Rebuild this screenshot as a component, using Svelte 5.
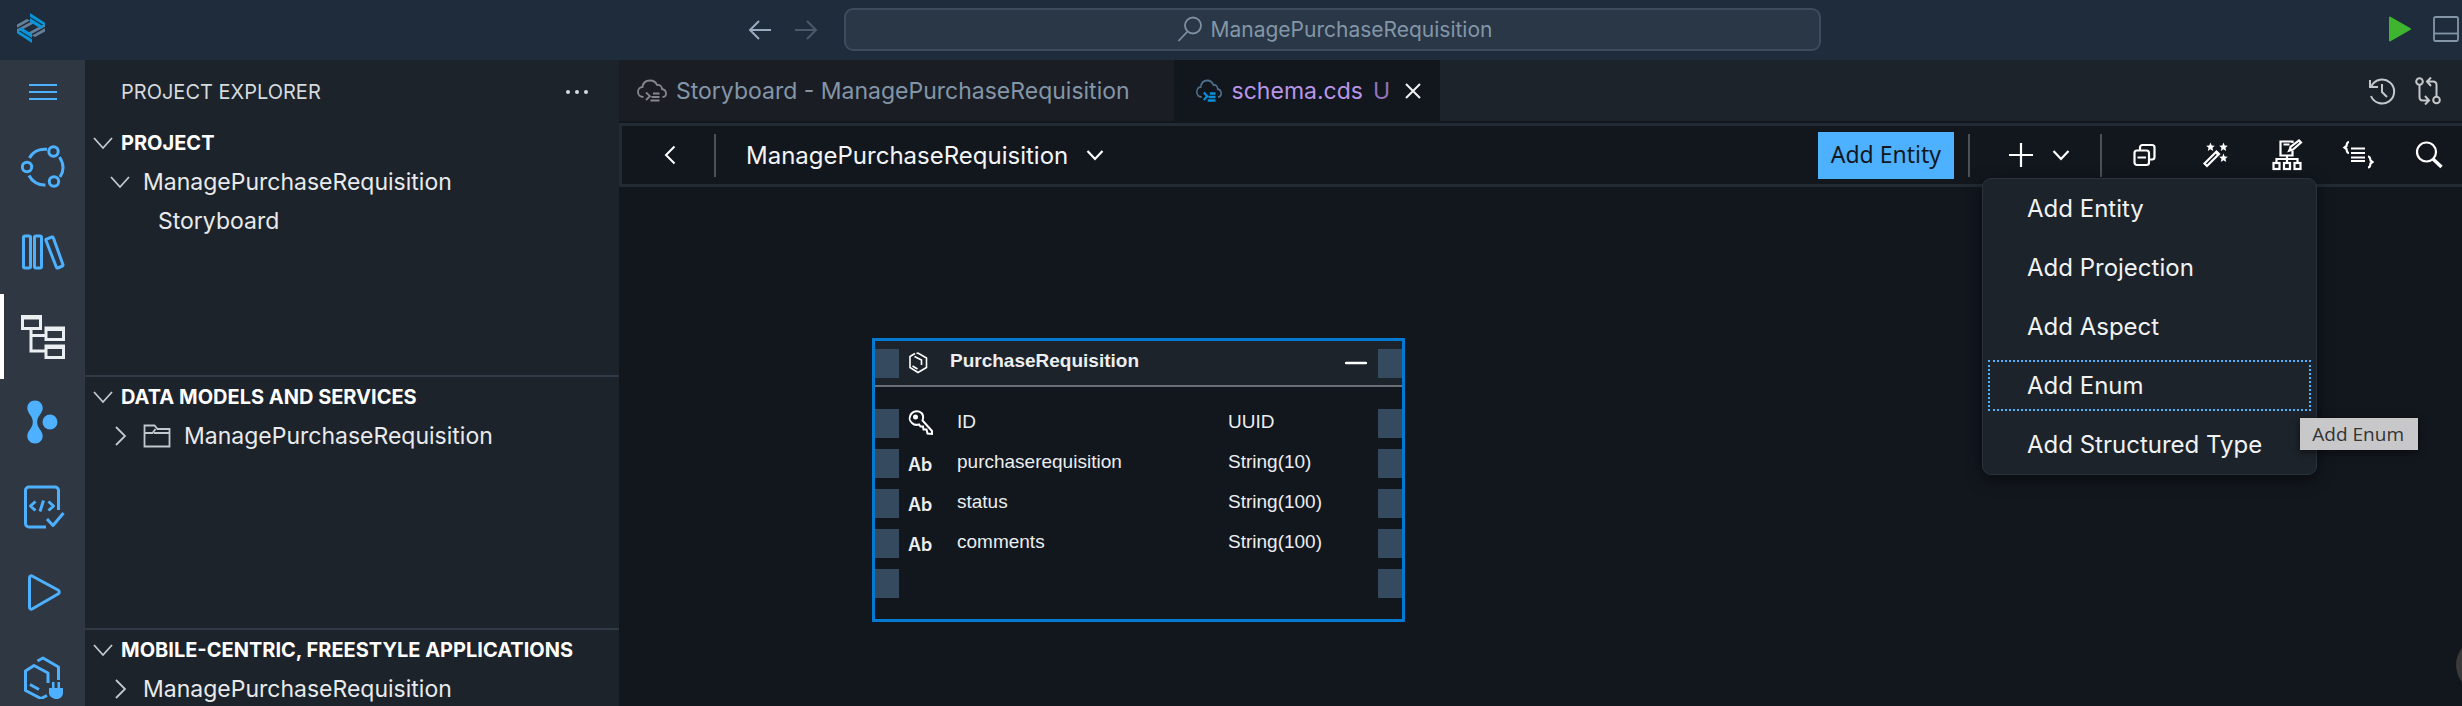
<script>
  const activities = ['share', 'library', 'tree', 'graph', 'tests', 'run', 'plug'];
  const labels = {
    share: 'Source relations',
    library: 'Library',
    tree: 'Project Explorer',
    graph: 'Source control',
    tests: 'Tests',
    run: 'Run configurations',
    plug: 'Connections'
  };
  let active = $state('tree');
  let focused = $state('Add Enum');

  const menu = ['Add Entity', 'Add Projection', 'Add Aspect', 'Add Enum', 'Add Structured Type'];

  const fields = [
    { name: 'ID', type: 'UUID', key: true },
    { name: 'purchaserequisition', type: 'String(10)' },
    { name: 'status', type: 'String(100)' },
    { name: 'comments', type: 'String(100)' }
  ];
</script>

{#snippet chevron(dir)}
  <svg class="chev" width="20" height="20" viewBox="0 0 20 20">
    {#if dir === 'down'}
      <path d="M1 5l9 10 9-10" />
    {:else}
      <path d="M6 1l9 9-9 9" />
    {/if}
  </svg>
{/snippet}

{#snippet cloud(cls, w)}
  <svg class={cls} width={w} height="24" viewBox="0 0 30 24" preserveAspectRatio="none">
    <path class="outline" d="M6.500 18C3 18 1 15.800 1 13c0-3 2-5 4.500-5C6 4 9 1.500 13 1.500c3.500 0 6 2 7 4.500 3-.5 5 1.500 5 4 2.500.5 4 2 4 4.500 0 2.200-1.500 3.500-3.500 3.500" />
    <path class="code" d="M9 13.500l4 3.700-4 3.800M16 14.500h6.500M14.500 18h8M13.500 21.500h9" />
  </svg>
{/snippet}

<div class="app">
  <header class="topbar">
    <div class="brand">
      <svg width="30" height="30" viewBox="0 0 30 30">
        <g fill="#66809a">
          <path d="M1 11.500L11 6l3 1.500L1 14.800z" />
          <path d="M1 16.200L15.500 8.500l3 1.500L3.500 18H1z" />
          <path d="M29 18.500L19 24l-3-1.500 13-7.300z" />
          <path d="M29 13.800L14.500 21.500l-3-1.500 15-8H29z" />
        </g>
        <g fill="#0a93d6">
          <path d="M14 0l15 9.800V13L14 3.800z" />
          <path d="M14 5l14 8.800-3.500 1.700L14 9z" />
          <path d="M16 30L1 20.200V17l15 9.200z" />
          <path d="M16 25L2 16.200l3.500-1.700L16 21z" />
        </g>
      </svg>
    </div>
    <div class="history">
      <button class="icon" aria-label="Back">
        <svg width="24" height="22" viewBox="0 0 24 22"><path d="M11 2L2 11l9 9M2 11h21" stroke="#9aabbf" stroke-width="2" /></svg>
      </button>
      <button class="icon" aria-label="Forward">
        <svg width="24" height="22" viewBox="0 0 24 22"><path d="M13 2l9 9-9 9M22 11H1" stroke="#4b5a6b" stroke-width="2" /></svg>
      </button>
    </div>
    <button class="command">
      <svg width="26" height="26" viewBox="0 0 26 26"><circle cx="16" cy="9.500" r="8" /><path d="M10.500 15.500L1.500 25" /></svg>
      <span>ManagePurchaseRequisition</span>
    </button>
    <div class="top-actions">
      <button class="icon" aria-label="Run">
        <svg width="24" height="26" viewBox="0 0 24 26"><path d="M2 1.500v23L22 13z" fill="#3fb52f" stroke="#3fb52f" stroke-width="2" stroke-linejoin="round" /></svg>
      </button>
      <button class="icon" aria-label="Toggle panel">
        <svg width="26" height="26" viewBox="0 0 26 26"><rect x="1" y="1" width="24" height="24" rx="1.500" stroke="#8396a8" stroke-width="1.800" /><path d="M1 17.500h24" stroke="#8396a8" stroke-width="1.800" /></svg>
      </button>
    </div>
  </header>

  <nav class="activity">
    <button class="act menu-btn" aria-label="Menu">
      <svg width="30" height="20" viewBox="0 0 30 20"><path d="M1 3h28M1 10h28M1 17h28" stroke-width="2.200" /></svg>
    </button>
    {#each activities as a}
      <button class="act" class:active={active === a} aria-label={labels[a]} onclick={() => (active = a)}>
        <svg width="44" height="44" viewBox="0 0 44 44">
          {#if a === 'share'}
            <circle cx="6" cy="22" r="4.700" /><circle cx="32.500" cy="6.500" r="4.700" /><circle cx="33" cy="36.500" r="4.700" />
            <path d="M8.500 13C11.500 7 18 3.500 26 4.300M38.500 12c4.500 7 4.500 14 .5 20M8 30.500c3 6 9.500 10 16.500 9.500" />
          {:else if a === 'library'}
            <rect x="2.500" y="6" width="7" height="32" rx="1.500" /><rect x="13.500" y="6" width="7" height="32" rx="1.500" />
            <path d="M25.500 9.200l5.500-2.200a1 1 0 0 1 1.300.7l9.700 27a1 1 0 0 1-.6 1.300l-4.600 2a1 1 0 0 1-1.400-.7L25 10.500a1 1 0 0 1 .5-1.300z" />
          {:else if a === 'tree'}
            <rect x="1.500" y="1.500" width="18" height="12" /><rect x="25" y="13" width="17.500" height="11.500" /><rect x="25" y="31" width="17.500" height="11.500" />
            <path d="M1.500 3h18M25 14.500h17.500M25 32.500h17.500M10 14v22h15M10 20.500h15" />
          {:else if a === 'graph'}
            <path class="solid" d="M14 0.500c4.500 0 7.700 3.200 7.700 7.500 0 5.500-5.500 7.500-5.500 14s5.500 8.500 5.500 14c0 4.300-3.200 7.500-7.700 7.500S6.300 40.300 6.300 36c0-5.500 5.500-7.500 5.500-14S6.300 13.500 6.300 8c0-4.300 3.200-7.500 7.700-7.500z" />
            <circle class="solid" cx="29" cy="22" r="7.500" />
          {:else if a === 'tests'}
            <path d="M25 42H8a3.500 3.500 0 0 1-3.500-3.500v-33A3.500 3.500 0 0 1 8 2h26a3.500 3.500 0 0 1 3.500 3.500V25M14.500 16.500L9.500 21l5 4.500M27.500 16.500l5 4.500-5 4.500M22.500 15.500l-3.500 11M26 34l6 6.500L42.500 28" />
          {:else if a === 'run'}
            <path d="M8.500 8v29c0 2 1.500 2.700 3 1.700L37 24c1.700-1 1.700-3 0-4L11.500 6.200c-1.500-1-3 0-3 1.800z" />
          {:else}
            <path d="M27 28V18L13 10.500 4.500 16v19.500L20 43.500l6-3M16.500 6L22 3l15.500 9v13M9 29.500l9 5" />
            <path class="solid" d="M28 33h14v5c0 3.500-3 5.500-5 6h-3c-3-1-6-3-6-6zM31 27h2.500v6H31zM36.500 27H39v6h-2.500z" />
          {/if}
        </svg>
      </button>
    {/each}
  </nav>

  <aside class="sidebar">
    <div class="side-head">
      <span>PROJECT EXPLORER</span>
      <button class="icon" aria-label="More actions">
        <svg width="24" height="6" viewBox="0 0 24 6"><g fill="#d5dade"><circle cx="3" cy="3" r="2" /><circle cx="12" cy="3" r="2" /><circle cx="21" cy="3" r="2" /></g></svg>
      </button>
    </div>
    <section>
      <h2>{@render chevron('down')}PROJECT</h2>
      <div class="row l1">{@render chevron('down')}<span>ManagePurchaseRequisition</span></div>
      <div class="row l2"><span>Storyboard</span></div>
    </section>
    <section>
      <h2>{@render chevron('down')}DATA MODELS AND SERVICES</h2>
      <div class="row l1">
        {@render chevron('right')}
        <svg class="folder" width="28" height="24" viewBox="0 0 28 24"><path d="M1.500 22.500v-21h10l3 3.500h12v17.500zM1.500 9h8l3-4M11 9h15" /></svg>
        <span>ManagePurchaseRequisition</span>
      </div>
    </section>
    <section>
      <h2>{@render chevron('down')}MOBILE-CENTRIC, FREESTYLE APPLICATIONS</h2>
      <div class="row l1">{@render chevron('right')}<span>ManagePurchaseRequisition</span></div>
    </section>
  </aside>

  <main class="editor">
    <div class="tabs">
      <button class="tab">
        {@render cloud('cloud gray', 30)}
        <span>Storyboard - ManagePurchaseRequisition</span>
      </button>
      <div class="tab current">
        {@render cloud('cloud blue', 26)}
        <span class="file">schema.cds</span>
        <span class="flag">U</span>
        <button class="icon" aria-label="Close">
          <svg width="18" height="18" viewBox="0 0 18 18"><path d="M2 2l14 14M16 2L2 16" stroke="#f0f2f4" stroke-width="2" /></svg>
        </button>
      </div>
      <div class="tab-actions">
        <button class="icon" aria-label="Timeline">
          <svg width="28" height="28" viewBox="0 0 28 28" stroke="#c5c8cb" stroke-width="2"><path d="M3.500 9A12 12 0 1 1 3 19M2 3v7h8M14 7v8l5 5" /></svg>
        </button>
        <button class="icon" aria-label="Compare changes">
          <svg width="28" height="28" viewBox="0 0 28 28" stroke="#c5c8cb" stroke-width="2"><circle cx="5.500" cy="4.500" r="3.300" /><circle cx="22.500" cy="23" r="3.300" /><path d="M5.500 8v12c0 2 1.500 3.500 3.500 3.500h5M11 19l4 4.500-4 4M22.500 19V8c0-2-1.500-3.500-3.500-3.500h-5M17 .5L13 4.500l4 4.500" /></svg>
        </button>
      </div>
    </div>

    <div class="toolbar">
      <button class="icon back" aria-label="Go back">
        <svg width="12" height="20" viewBox="0 0 12 20"><path d="M10.500 1.500L2 10l8.500 8.500" stroke="#fff" stroke-width="2" /></svg>
      </button>
      <i class="sep"></i>
      <button class="scope">
        ManagePurchaseRequisition
        <svg width="18" height="12" viewBox="0 0 18 12"><path d="M1.500 2L9 10l7.500-8" stroke="#fff" stroke-width="2.200" /></svg>
      </button>
      <button class="primary">Add Entity</button>
      <i class="sep"></i>
      <div class="split">
        <button class="icon" aria-label="Add">
          <svg width="26" height="26" viewBox="0 0 26 26"><path d="M13 1v24M1 13h24" stroke="#fff" stroke-width="2.200" /></svg>
        </button>
        <button class="icon" aria-label="More types to add">
          <svg width="18" height="12" viewBox="0 0 18 12"><path d="M1.500 2L9 10l7.500-8" stroke="#fff" stroke-width="2.200" /></svg>
        </button>
      </div>
      <i class="sep"></i>
      <div class="tools">
        <button class="icon" aria-label="Show details">
          <svg width="32" height="32" viewBox="0 0 32 32"><rect x="5.500" y="11.500" width="14.500" height="14.500" rx="2.500" /><path d="M11 11V8.500A2.500 2.500 0 0 1 13.500 6h9.500A2.500 2.500 0 0 1 25.500 8.500v9.500a2.500 2.500 0 0 1-2.500 2.500h-2.500M8.500 18.500h8.500" /></svg>
        </button>
        <button class="icon" aria-label="Auto layout">
          <svg width="32" height="32" viewBox="0 0 32 32"><path d="M4.500 24.500L16.500 12.500l2.500 2.500L7 27z" /><path class="fill" d="M15 14l1.500-1.500L19 15l-1.500 1.500zM10.500 3.500l1.200 3 3.100.3-2.300 2 .7 3.200-2.700-1.700L7.800 12l.7-3.200-2.300-2 3.100-.3zM23.500 3.500l1.200 3 3.100.3-2.300 2 .7 3.200-2.700-1.700-2.700 1.700.7-3.200-2.300-2 3.100-.3zM23.500 14.500l1.200 3 3.100.3-2.300 2 .7 3.200-2.700-1.700-2.700 1.700.7-3.200-2.300-2 3.100-.3z" /></svg>
        </button>
        <button class="icon" aria-label="Edit hierarchy">
          <svg width="32" height="32" viewBox="0 0 32 32"><path d="M21.500 4V2.500H9.500v14h12V12M12.500 5.500h6M16 17v6M5.500 23v-3h21v3" /><path d="M18.500 11.500l1-3.500L28 1.500l2 2-8 7z" /><path class="fill" d="M16 13.500l3-5 3 2.500z" /><rect x="2.500" y="24" width="6" height="6" /><rect x="13" y="24" width="6" height="6" /><rect x="23.500" y="24" width="6" height="6" /></svg>
        </button>
        <button class="icon" aria-label="Source">
          <svg width="32" height="32" viewBox="0 0 32 32"><path d="M7 3C4.500 3 5 5 4.500 7L2.500 8.500l2 1.500c.5 2 0 4 2.500 4M9 9.500h14M9 14h14M9 18.500h14M9 22h14M26 17.500c2.500 0 2 2.500 2.500 4l2 1.500-2 1.500c-.5 2 0 4-2.500 4" /></svg>
        </button>
        <button class="icon" aria-label="Search">
          <svg width="32" height="32" viewBox="0 0 32 32"><circle cx="13.500" cy="13" r="9.500" /><path d="M20 20l8.500 8" stroke-width="3.500" /></svg>
        </button>
      </div>
    </div>

    <div class="canvas">
      <article class="entity">
        <header>
          <i class="port"></i>
          <svg width="20" height="22" viewBox="0 0 20 22" stroke="#fff" stroke-width="1.600"><path d="M7 1.500l-5 3v11l8 5 8.500-5V6L10 1l-1.500.5M6.500 4.500L13.500 8v5M4.500 14l5 3" /></svg>
          <h3>PurchaseRequisition</h3>
          <button class="icon" aria-label="Collapse">
            <svg width="22" height="4" viewBox="0 0 22 4"><path d="M1 2h20" stroke="#fff" stroke-width="2.500" stroke-linecap="round" /></svg>
          </button>
          <i class="port"></i>
        </header>
        <table>
          <tbody>
            {#each fields as f}
              <tr>
                <td class="edge"><i class="port"></i></td>
                <td class="kind" class:abbr={!f.key}>
                  {#if f.key}
                    <svg width="26" height="26" viewBox="0 0 26 26" stroke="#fff" stroke-width="2"><path d="M13.500 3C10.500.5 6 .8 3.500 3.500 1 6.500 1 10.500 4 13c2 2 4.500 2.200 7 1.500l1.500 2h2.500l.5 3h3l1 4 4.500.5V21L14.500 10.500c1-2.500.8-5.500-1-7.500z" /><circle cx="7.500" cy="7" r="2.500" fill="#fff" stroke="none" /></svg>
                  {:else}
                    Ab
                  {/if}
                </td>
                <td class="name">{f.name}</td>
                <td class="type">{f.type}</td>
                <td class="edge"><i class="port"></i></td>
              </tr>
            {/each}
            <tr>
              <td class="edge"><i class="port"></i></td>
              <td colspan="3"></td>
              <td class="edge"><i class="port"></i></td>
            </tr>
          </tbody>
        </table>
      </article>
      <div class="bubble"></div>
    </div>

    <div class="popup" role="menu">
      {#each menu as m}
        <button role="menuitem" class:focused={focused === m} onclick={() => (focused = m)}>{m}</button>
      {/each}
      <div class="tooltip" role="tooltip">Add Enum</div>
    </div>
  </main>
</div>

<style>
  :global(body) {
    background: #12171e;
  }
  .app {
    display: grid;
    grid-template-columns: 85px 534px minmax(0, 1fr);
    grid-template-rows: 60px minmax(0, 1fr);
    height: 100vh;
    overflow: hidden;
    font-family: Inter, 'Liberation Sans', sans-serif;
    font-size: 23px;
    color: #e8eaed;
  }
  svg {
    fill: none;
    display: block;
    flex: none;
  }
  button {
    font: inherit;
    color: inherit;
    background: none;
    border: 0;
    padding: 0;
    margin: 0;
    cursor: pointer;
  }
  .icon {
    display: flex;
  }

  .topbar {
    grid-column: 1 / -1;
    display: grid;
    grid-template-columns: minmax(0, 1fr) minmax(0, 978px) minmax(0, 1fr);
    align-items: center;
    background: #1e2c3c;
  }
  .brand {
    grid-area: 1 / 1;
    padding-left: 16px;
    padding-bottom: 4px;
  }
  .history {
    grid-area: 1 / 1;
    justify-self: end;
    display: flex;
    gap: 22px;
    margin-right: -76px;
  }
  .command {
    grid-area: 1 / 2;
    margin: 0 -101px 2px 102px;
    height: 43px;
    display: flex;
    align-items: center;
    justify-content: center;
    gap: 8px;
    padding-left: 4px;
    border: 2px solid #3d4b5c;
    border-radius: 9px;
    background: #293747;
    color: #8396a8;
    font-size: 21px;
  }
  .command svg {
    stroke: #7f90a2;
    stroke-width: 1.8;
  }
  .top-actions {
    grid-area: 1 / 3;
    justify-self: end;
    display: flex;
    gap: 21px;
    padding: 0 3px 3px 0;
  }

  .activity {
    background: #2f3742;
  }
  .act {
    display: flex;
    align-items: center;
    justify-content: center;
    width: 100%;
    height: 85px;
    box-sizing: border-box;
    stroke: #4db1ff;
    stroke-width: 3;
  }
  .act svg {
    stroke-linecap: butt;
    stroke-linejoin: round;
  }
  .act .solid {
    fill: #4db1ff;
    stroke: none;
  }
  .menu-btn {
    height: 64px;
  }
  .active {
    stroke: #eceff2;
    box-shadow: inset 4px 0 #fff;
  }
  .active svg {
    stroke-linejoin: miter;
  }

  .sidebar {
    background: #1d232a;
    overflow: hidden;
  }
  .side-head {
    height: 63px;
    display: flex;
    align-items: center;
    justify-content: space-between;
    padding: 0 30px 0 36px;
    font-size: 20px;
    color: #d5dade;
  }
  section {
    min-height: 253px;
    box-sizing: border-box;
    border-top: 2px solid #303946;
  }
  .side-head + section {
    min-height: 252px;
    border-top: 0;
  }
  h2 {
    display: flex;
    align-items: center;
    gap: 8px;
    height: 39px;
    margin: 0;
    padding-left: 8px;
    font-size: 20px;
    font-weight: 700;
    color: #fff;
    white-space: nowrap;
  }
  .chev {
    stroke: #c3c8cd;
    stroke-width: 1.8;
  }
  .row {
    display: flex;
    align-items: center;
    height: 39px;
    gap: 13px;
    white-space: nowrap;
  }
  .l1 {
    padding-left: 25px;
  }
  .l2 {
    padding-left: 73px;
  }
  .folder {
    stroke: #c3c8cd;
    stroke-width: 1.8;
  }

  .editor {
    position: relative;
    display: flex;
    flex-direction: column;
    min-width: 0;
  }
  .tabs {
    display: flex;
    height: 61px;
    flex: none;
    background: #1d232a;
    border-bottom: 2px solid #12171e;
  }
  .tab {
    display: flex;
    align-items: center;
    gap: 9px;
    padding: 0 44px 0 18px;
    background: #1b1d25;
    color: #8396a8;
    white-space: nowrap;
  }
  .current {
    gap: 10px;
    padding: 0 18px 0 22px;
    background: #12171e;
  }
  .current .icon {
    margin-left: 4px;
  }
  .file {
    color: #b995e8;
  }
  .flag {
    color: #9272b8;
  }
  .cloud {
    stroke-width: 1.8;
  }
  .gray {
    stroke: #85878c;
  }
  .blue {
    stroke: #4f6f8c;
  }
  .blue .code {
    stroke: #0a8fd8;
    stroke-width: 2.4;
  }
  .tab-actions {
    margin-left: auto;
    display: flex;
    align-items: center;
    gap: 18px;
    padding-right: 20px;
  }

  .toolbar {
    display: flex;
    align-items: center;
    height: 58px;
    flex: none;
    border: 3px solid #222a33;
    border-right: 0;
  }
  .back {
    padding: 0 38px 0 42px;
  }
  .sep {
    width: 2px;
    height: 43px;
    background: #4c5157;
  }
  .scope {
    display: flex;
    align-items: center;
    gap: 18px;
    margin-right: auto;
    padding-left: 30px;
    font-size: 24px;
    color: #f2f4f6;
  }
  .primary {
    height: 47px;
    padding: 0 13px 2px;
    margin-right: 14px;
    background: #4db1ff;
    color: #12171e;
    font-family: 'Noto Sans', sans-serif;
    font-size: 23px;
    line-height: 32px;
    white-space: nowrap;
  }
  .split {
    display: flex;
    align-items: center;
    gap: 18px;
    padding: 0 30px 0 38px;
  }
  .tools {
    display: flex;
    gap: 39px;
    padding: 0 17px 0 27px;
    stroke: #fff;
    stroke-width: 2.2;
  }
  .tools .fill {
    fill: #fff;
    stroke: none;
  }

  .canvas {
    position: relative;
    flex: 1;
    min-height: 0;
    overflow: hidden;
    background: #12171e;
  }
  .entity {
    position: absolute;
    left: 253px;
    top: 151px;
    width: 533px;
    box-sizing: border-box;
    border: 3px solid #0479d2;
    font-family: 'Liberation Sans', Arial, sans-serif;
    font-size: 19px;
    color: #eceef0;
  }
  .entity header {
    display: flex;
    align-items: center;
    height: 44px;
    background: #1d232a;
    border-bottom: 2px solid #6b6f75;
  }
  .entity header svg {
    margin-left: 9px;
  }
  h3 {
    margin: 0 auto 0 22px;
    padding-bottom: 4px;
    font-size: 19px;
    font-weight: 700;
  }
  .entity header .icon {
    margin-right: 11px;
  }
  .port {
    display: block;
    width: 24px;
    height: 29px;
    background: #354a5f;
  }
  table {
    width: 100%;
    border-collapse: collapse;
    table-layout: fixed;
    margin: 16px 0;
  }
  td {
    padding: 0;
    height: 40px;
    box-sizing: border-box;
  }
  .edge {
    width: 24px;
  }
  .kind {
    width: 58px;
    padding-left: 9px;
  }
  .abbr {
    padding-top: 3px;
    font-family: Inter, sans-serif;
    font-size: 18px;
    font-weight: 600;
  }
  .name,
  .type {
    padding-bottom: 2px;
  }
  .type {
    width: 150px;
  }
  .bubble {
    position: absolute;
    right: -48px;
    bottom: 14px;
    width: 54px;
    height: 54px;
    border-radius: 50%;
    background: #3a3a3a;
  }

  .popup {
    position: absolute;
    top: 118px;
    right: 145px;
    width: 335px;
    box-sizing: border-box;
    display: flex;
    flex-direction: column;
    gap: 8px;
    padding: 4px 5px;
    border: 1px solid #2a323c;
    border-radius: 9px;
    background: #1d232a;
    box-shadow: 0 4px 16px #0008;
    font-size: 24px;
    color: #f0f2f4;
  }
  .popup button {
    height: 51px;
    padding-left: 37px;
    border: 2px solid transparent;
    text-align: left;
  }
  .popup .focused {
    border: 2px dotted #4db1ff;
  }
  .tooltip {
    position: absolute;
    right: -102px;
    bottom: 24px;
    padding: 0 14px 0 12px;
    background: #c8c8ca;
    color: #333;
    font-family: 'Open Sans', sans-serif;
    font-size: 19px;
    line-height: 32px;
    white-space: nowrap;
    box-shadow: 0 2px 8px #0008;
  }
</style>
